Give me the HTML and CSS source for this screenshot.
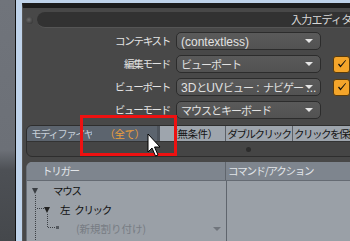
FILE: index.html
```html
<!DOCTYPE html>
<html lang="ja">
<head>
    <meta charset="UTF-8">
    <title>入力エディタ</title>
    <link rel="stylesheet" href="styles.css">
</head>
<body>
    <div class="screen">
        <div class="frame">
            <div class="window">
                <div class="titlebar">
                    <span class="dot"></span>
                    <div class="bar"><span>入力エディタ</span></div>
                </div>

                <div class="form">
                    <label>コンテキスト</label>
                    <div class="select"><span class="lat">(contextless)</span></div>
                    <span></span>

                    <label>編集モード</label>
                    <div class="select">ビューポート</div>
                    <span class="check"><svg viewBox="0 0 12 12"><path d="M2 6.5 L4.5 9.5 L10 2.5 L9.5 2 L4.6 7.6 L3 5.6 Z" fill="#111"/></svg></span>

                    <label>ビューポート</label>
                    <div class="select"><span class="lat">3D</span>と<span class="lat">UV</span>ビュー<span class="lat"> : </span>ナビゲー<span class="lat"> ...</span></div>
                    <span class="check"><svg viewBox="0 0 12 12"><path d="M2 6.5 L4.5 9.5 L10 2.5 L9.5 2 L4.6 7.6 L3 5.6 Z" fill="#111"/></svg></span>

                    <label>ビューモード</label>
                    <div class="select">マウスとキーボード</div>
                    <span></span>
                </div>

                <div class="tabs">
                    <div class="tabrow">
                        <div class="tab head">モディファイヤ</div>
                        <div class="tab all">（全て）</div>
                        <div class="tab light first">（無条件）</div>
                        <div class="tab light">ダブルクリック</div>
                        <div class="tab light">クリックを保持</div>
                    </div>
                    <div class="tabfoot"><span class="knob"></span></div>
                </div>

                <div class="tree">
                    <div class="tree-head">
                        <div class="col-a">トリガー</div>
                        <div class="col-b">コマンド/アクション</div>
                    </div>
                    <div class="tree-body">
                        <svg class="links" width="60" height="60">
                            <path d="M8.5 14 V60" stroke="#3c4045" stroke-dasharray="1 1" fill="none"/>
                            <path d="M10 27.5 H17" stroke="#3c4045" stroke-dasharray="1 1" fill="none"/>
                            <path d="M20.5 33 V46.5 H29" stroke="#3c4045" stroke-dasharray="1 1" fill="none"/>
                            <rect x="29" y="45" width="3" height="3" fill="#555a60"/>
                        </svg>
                        <div class="row lvl1"><span class="tri"></span>マウス</div>
                        <div class="row lvl2"><span class="tri"></span>左<span class="gap"></span>クリック</div>
                        <div class="row lvl3"><span class="new">(新規割り付け)</span><span class="arrow"></span></div>
                    </div>
                </div>
            </div>
        </div>
    </div>

    <div class="highlight"></div>
    <svg class="cursor" width="16" height="26" viewBox="0 0 16 26">
        <path d="M1 1 V19 L5 15 L8.5 23 L11 22 L7.5 14 H13 Z" fill="#fff" stroke="#000" stroke-width="1"/>
    </svg>
</body>
</html>
```

FILE: styles.css
```css
body {
    margin: 0;
    padding: 0;
    background: linear-gradient(#70747b 0, #6c7077 150px, #4d5055 170px, #45484c 241px);
    font-family: "Noto Sans CJK JP", sans-serif;
    font-size: 10.5px;
    letter-spacing: -1.3px;
    height: 241px;
    overflow: hidden;
}

.lat {
    font-family: "Liberation Sans", sans-serif;
    font-size: 12px;
    letter-spacing: 0;
}

.screen {
    display: flex;
    height: 241px;
}

.frame {
    flex: 1;
    margin-left: 15px;
    border-left: 1px solid #111;
    background-color: #bfd3ea;
    padding: 3px 0 0 6px;
}

.window {
    height: 100%;
    background-color: #484848;
    border-top: 5px solid #1c1c1c;
    border-left: 1px solid #585858;
    box-sizing: border-box;
}

.titlebar {
    display: flex;
    align-items: center;
    margin-top: 4px;
    padding-left: 3px;
    gap: 4px;
}

.dot {
    width: 7px;
    height: 7px;
    border-radius: 50%;
    background: radial-gradient(circle at 40% 40%, #6a6a6a, #2a2a2a);
}

.bar {
    flex: 1;
    height: 15px;
    background-color: #323232;
    border-radius: 8px 0 0 8px;
    border-bottom: 1px solid #555;
    color: #d8d8d8;
    line-height: 15px;
    white-space: nowrap;
    overflow: hidden;
    font-size: 11px;
    letter-spacing: -0.8px;
}

.bar span {
    display: block;
    margin-left: 254px;
}

.form {
    display: grid;
    grid-template-columns: 148px 145px 17px;
    column-gap: 5px;
    row-gap: 5px;
    margin-top: 4px;
    align-items: center;
}

.form label {
    text-align: right;
    color: #e4e4e4;
    line-height: 18px;
    white-space: nowrap;
    padding-right: 1px;
}

.select {
    position: relative;
    height: 18px;
    box-sizing: border-box;
    border: 1px solid #2c2c2c;
    border-radius: 5px;
    background: linear-gradient(#5a5a5a, #525252);
    color: #e2e2e2;
    font-size: 11px;
    letter-spacing: -1px;
    line-height: 16px;
    padding-left: 4px;
    white-space: nowrap;
    overflow: hidden;
}

.select::after {
    content: "";
    position: absolute;
    right: 7px;
    top: 6px;
    border-left: 4px solid transparent;
    border-right: 4px solid transparent;
    border-top: 4px solid #e6e6e6;
}

.check {
    margin-left: 7px;
    width: 17px;
    height: 17px;
    box-sizing: border-box;
    border: 1px solid #5a3c0c;
    border-radius: 3px;
    background-color: #f4a52a;
    display: flex;
    align-items: center;
    justify-content: center;
}

.check svg {
    width: 12px;
    height: 12px;
}

.tabs {
    margin: 6px -4px 0 3px;
    border: 1px solid #2e2e2e;
    border-radius: 6px 0 0 6px;
    background-color: #454545;
    overflow: hidden;
}

.tabrow {
    display: flex;
    height: 15px;
    border-bottom: 1px solid #333;
    white-space: nowrap;
}

.tab {
    line-height: 15px;
    overflow: hidden;
    letter-spacing: -1.5px;
}

.head {
    width: 65px;
    background-color: #5c646e;
    color: #c9d1da;
    padding-left: 4px;
    box-sizing: border-box;
}

.all {
    width: 65px;
    background-color: #5c646e;
    color: #eb9e3c;
    text-align: center;
    border-right: 3px solid #4e545c;
    letter-spacing: -0.5px;
}

.light {
    width: 66px;
    background-color: #9ea5ad;
    color: #141414;
    text-align: center;
    border-left: 1px solid #5c6168;
}

.light.first {
    width: 65px;
    border-left: none;
    letter-spacing: -0.5px;
}

.tab:last-child {
    flex: 1;
    text-align: left;
    padding-left: 1px;
}

.tabfoot {
    height: 14px;
    display: flex;
    align-items: center;
    padding-left: 219px;
}

.knob {
    width: 5px;
    height: 5px;
    border-radius: 50%;
    background-color: #2c2c2c;
}

.tree {
    margin: 5px 0 0 3px;
    border-radius: 6px 0 0 0;
    background-color: #9aa0a7;
    height: 80px;
    overflow: hidden;
    border-left: 1px solid #6a7078;
}

.tree-head {
    display: flex;
    height: 18px;
    background-color: #7e858e;
    border-bottom: 1px solid #656b73;
    color: #e2e6ea;
    line-height: 18px;
}

.col-a {
    width: 199px;
    padding-left: 15px;
    box-sizing: border-box;
    border-right: 1px solid #5f656d;
}

.col-b {
    padding-left: 2px;
}

.tree-body {
    position: relative;
    height: 62px;
    background: linear-gradient(to right, transparent 199px, #5f656d 199px, #5f656d 200px, transparent 200px);
}

.links {
    position: absolute;
    left: 0;
    top: 0;
}

.row {
    display: flex;
    align-items: center;
    height: 19px;
    color: #111;
    white-space: nowrap;
}

.gap {
    width: 5px;
}

.tri {
    width: 0;
    height: 0;
    border-left: 3px solid transparent;
    border-right: 3px solid transparent;
    border-top: 6px solid #3a3e43;
}

.lvl1 {
    padding-left: 5px;
}

.lvl1 .tri {
    margin-right: 15px;
}

.lvl2 {
    padding-left: 17px;
}

.lvl2 .tri {
    border-top-color: #222;
    margin-right: 10px;
}

.lvl3 {
    padding-left: 49px;
    width: 199px;
    box-sizing: border-box;
}

.new {
    flex: 1;
    color: #777c83;
    letter-spacing: 0;
}

.arrow {
    width: 0;
    height: 0;
    border-left: 4px solid transparent;
    border-right: 4px solid transparent;
    border-top: 4px solid #70757c;
    margin-right: 5px;
}

.highlight {
    position: absolute;
    left: 80px;
    top: 115px;
    width: 97px;
    height: 41px;
    box-sizing: border-box;
    border: 3px solid #ee1111;
}

.cursor {
    position: absolute;
    left: 147px;
    top: 133px;
}
```
